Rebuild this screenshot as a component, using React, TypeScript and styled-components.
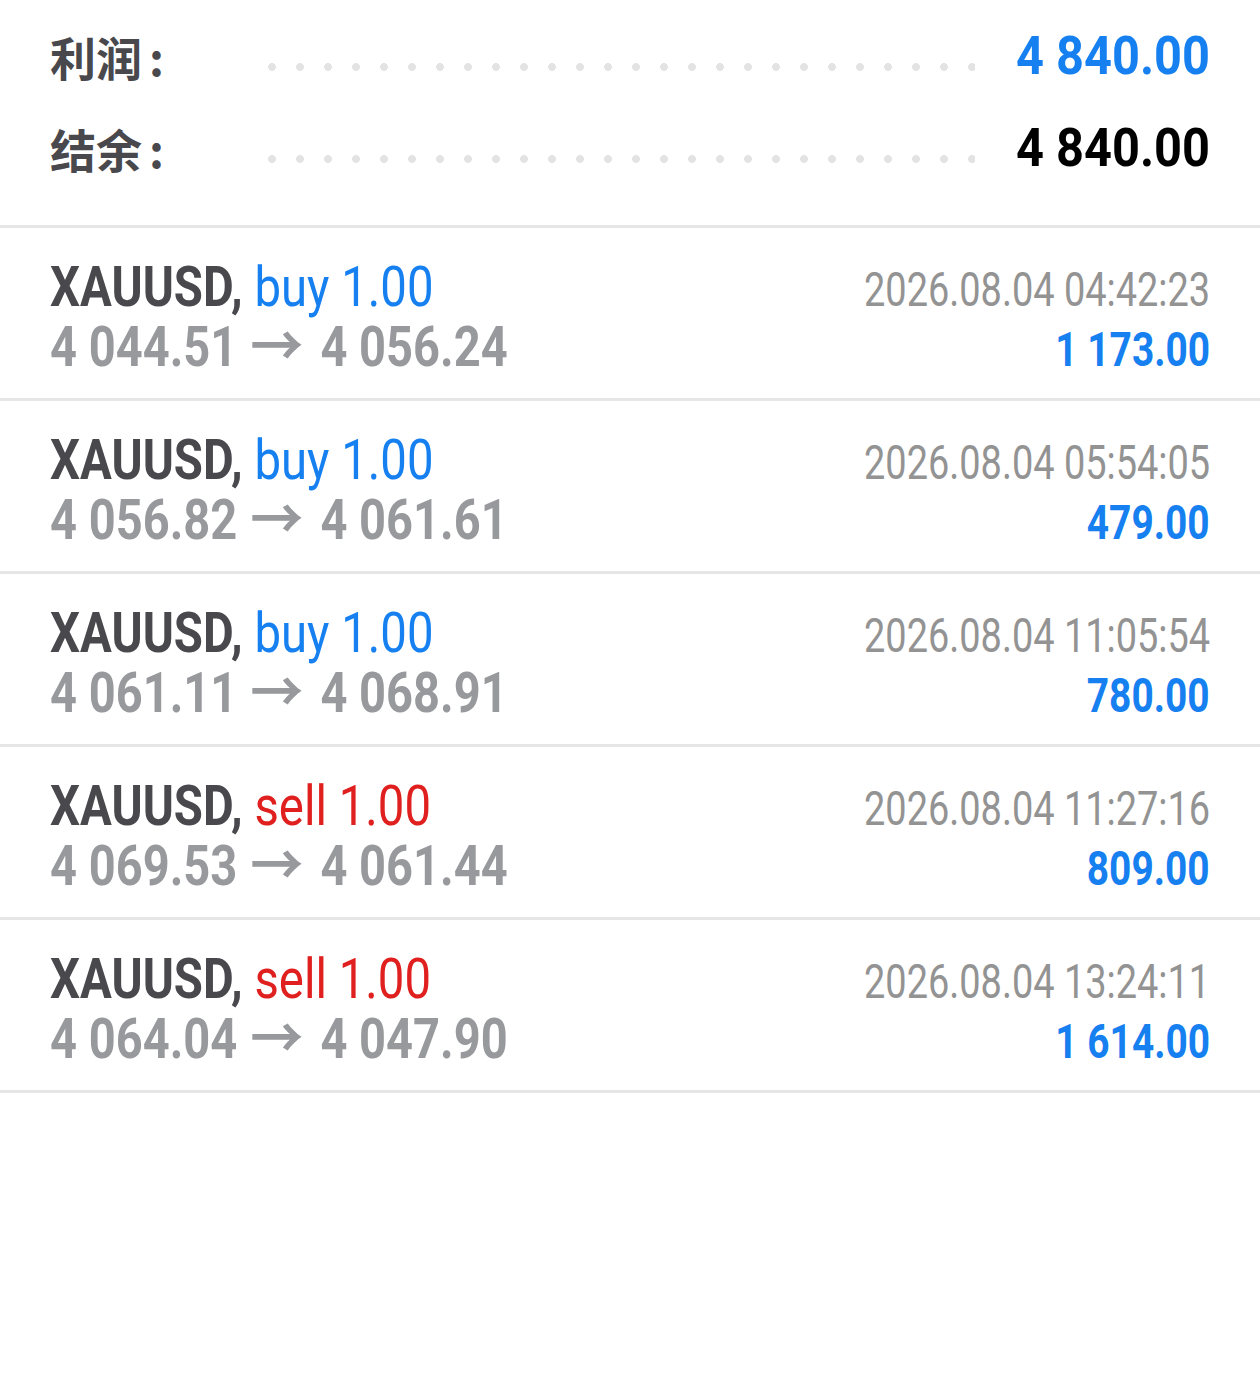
import styled, { createGlobalStyle } from "styled-components";

type Deal = {
  symbol: string;
  side: "buy" | "sell";
  volume: string;
  open: string;
  close: string;
  time: string;
  profit: string;
};

const deals: Deal[] = [
  { symbol: "XAUUSD", side: "buy", volume: "1.00", open: "4 044.51", close: "4 056.24", time: "2026.08.04 04:42:23", profit: "1 173.00" },
  { symbol: "XAUUSD", side: "buy", volume: "1.00", open: "4 056.82", close: "4 061.61", time: "2026.08.04 05:54:05", profit: "479.00" },
  { symbol: "XAUUSD", side: "buy", volume: "1.00", open: "4 061.11", close: "4 068.91", time: "2026.08.04 11:05:54", profit: "780.00" },
  { symbol: "XAUUSD", side: "sell", volume: "1.00", open: "4 069.53", close: "4 061.44", time: "2026.08.04 11:27:16", profit: "809.00" },
  { symbol: "XAUUSD", side: "sell", volume: "1.00", open: "4 064.04", close: "4 047.90", time: "2026.08.04 13:24:11", profit: "1 614.00" },
];

const BLUE = "#1680f0";
const RED = "#e0201f";
const DARK = "#48484d";
const GRAY = "#98999c";
const LINE = "#e6e6e6";

const GlobalStyle = createGlobalStyle`
  html, body {
    margin: 0;
    padding: 0;
    background: #fff;
  }
  body {
    font-family: Roboto, "Noto Sans CJK SC", sans-serif;
    -webkit-font-smoothing: antialiased;
  }
`;

function App() {
  return (
    <Page>
      <GlobalStyle />
      <Summary>
        <SummaryRow>
          <Label>
            利润<Colon>:</Colon>
          </Label>
          <Dots />
          <Total $color={BLUE}>
            <Narrow $origin="right" $scale={0.92}>4 840.00</Narrow>
          </Total>
        </SummaryRow>
        <SummaryRow>
          <Label>
            结余<Colon>:</Colon>
          </Label>
          <Dots />
          <Total $color="#000">
            <Narrow $origin="right" $scale={0.92}>4 840.00</Narrow>
          </Total>
        </SummaryRow>
      </Summary>
      <List>
        {deals.map((d, i) => (
          <DealRow key={`deal-${i}`}>
            <Left>
              <Title>
                <Narrow $origin="left" $scale={0.845}>
                  <Symbol>{d.symbol},</Symbol>{" "}
                  <Side $sell={d.side === "sell"}>
                    {d.side} {d.volume}
                  </Side>
                </Narrow>
              </Title>
              <Prices>
                <Narrow $origin="left" $scale={0.84}>
                  {d.open}
                  <Arrow>→</Arrow>
                  {d.close}
                </Narrow>
              </Prices>
            </Left>
            <Right>
              <Time>
                <Narrow $origin="right" $scale={0.79}>{d.time}</Narrow>
              </Time>
              <Profit>
                <Narrow $origin="right" $scale={0.81}>{d.profit}</Narrow>
              </Profit>
            </Right>
          </DealRow>
        ))}
      </List>
    </Page>
  );
}

const Page = styled.div`
  width: 1260px;
  min-height: 1380px;
  background: #fff;
`;

// Roboto Condensed is not installed, squeeze Roboto instead
const Narrow = styled.span<{ $origin: "left" | "right"; $scale: number }>`
  display: inline-block;
  white-space: nowrap;
  transform: scaleX(${(p) => p.$scale});
  transform-origin: ${(p) => p.$origin} center;
`;

const Summary = styled.div`
  padding: 10px 50px 31px;
  border-bottom: 3px solid ${LINE};
`;

const SummaryRow = styled.div`
  display: flex;
  align-items: center;
  height: 92px;
`;

const Label = styled.div`
  width: 218px;
  flex-shrink: 0;
  font-family: "Noto Sans CJK SC", sans-serif;
  font-weight: 700;
  font-size: 46px;
  color: ${DARK};
  line-height: 1;
`;

const Colon = styled.span`
  margin-left: 7px;
`;

const Dots = styled.div`
  flex: 1;
  height: 8px;
  margin-top: 22px;
  margin-right: 24px;
  background-image: radial-gradient(circle, #e3e3e3 3.6px, transparent 4.2px);
  background-size: 28px 8px;
  background-repeat: repeat-x;
  background-position: -10px 0;
`;

const Total = styled.div<{ $color: string }>`
  font-family: Roboto, sans-serif;
  font-weight: 700;
  font-size: 53px;
  color: ${(p) => p.$color};
  line-height: 1;
  text-align: right;
`;

const List = styled.div`
  display: flex;
  flex-direction: column;
`;

const DealRow = styled.div`
  display: flex;
  justify-content: space-between;
  padding: 29px 50px 21px;
  border-bottom: 3px solid ${LINE};
`;

const Left = styled.div`
  display: flex;
  flex-direction: column;
`;

const Right = styled.div`
  display: flex;
  flex-direction: column;
  align-items: flex-end;
`;

const Title = styled.div`
  font-size: 56px;
  line-height: 60px;
`;

const Symbol = styled.span`
  font-weight: 700;
  color: ${DARK};
`;

const Side = styled.span<{ $sell: boolean }>`
  font-weight: 400;
  color: ${(p) => (p.$sell ? RED : BLUE)};
`;

const Prices = styled.div`
  font-size: 56px;
  line-height: 60px;
  height: 60px;
  font-weight: 700;
  color: ${GRAY};
`;

const Arrow = styled.span`
  display: inline-block;
  line-height: 0;
  font-weight: 700;
  margin: 0 24px 0 19px;
  transform: scaleX(1.13);
`;

const Time = styled.div`
  font-size: 48px;
  line-height: 66px;
  color: #939393;
`;

const Profit = styled.div`
  font-size: 48px;
  line-height: 54px;
  font-weight: 700;
  color: ${BLUE};
`;

export default App;
